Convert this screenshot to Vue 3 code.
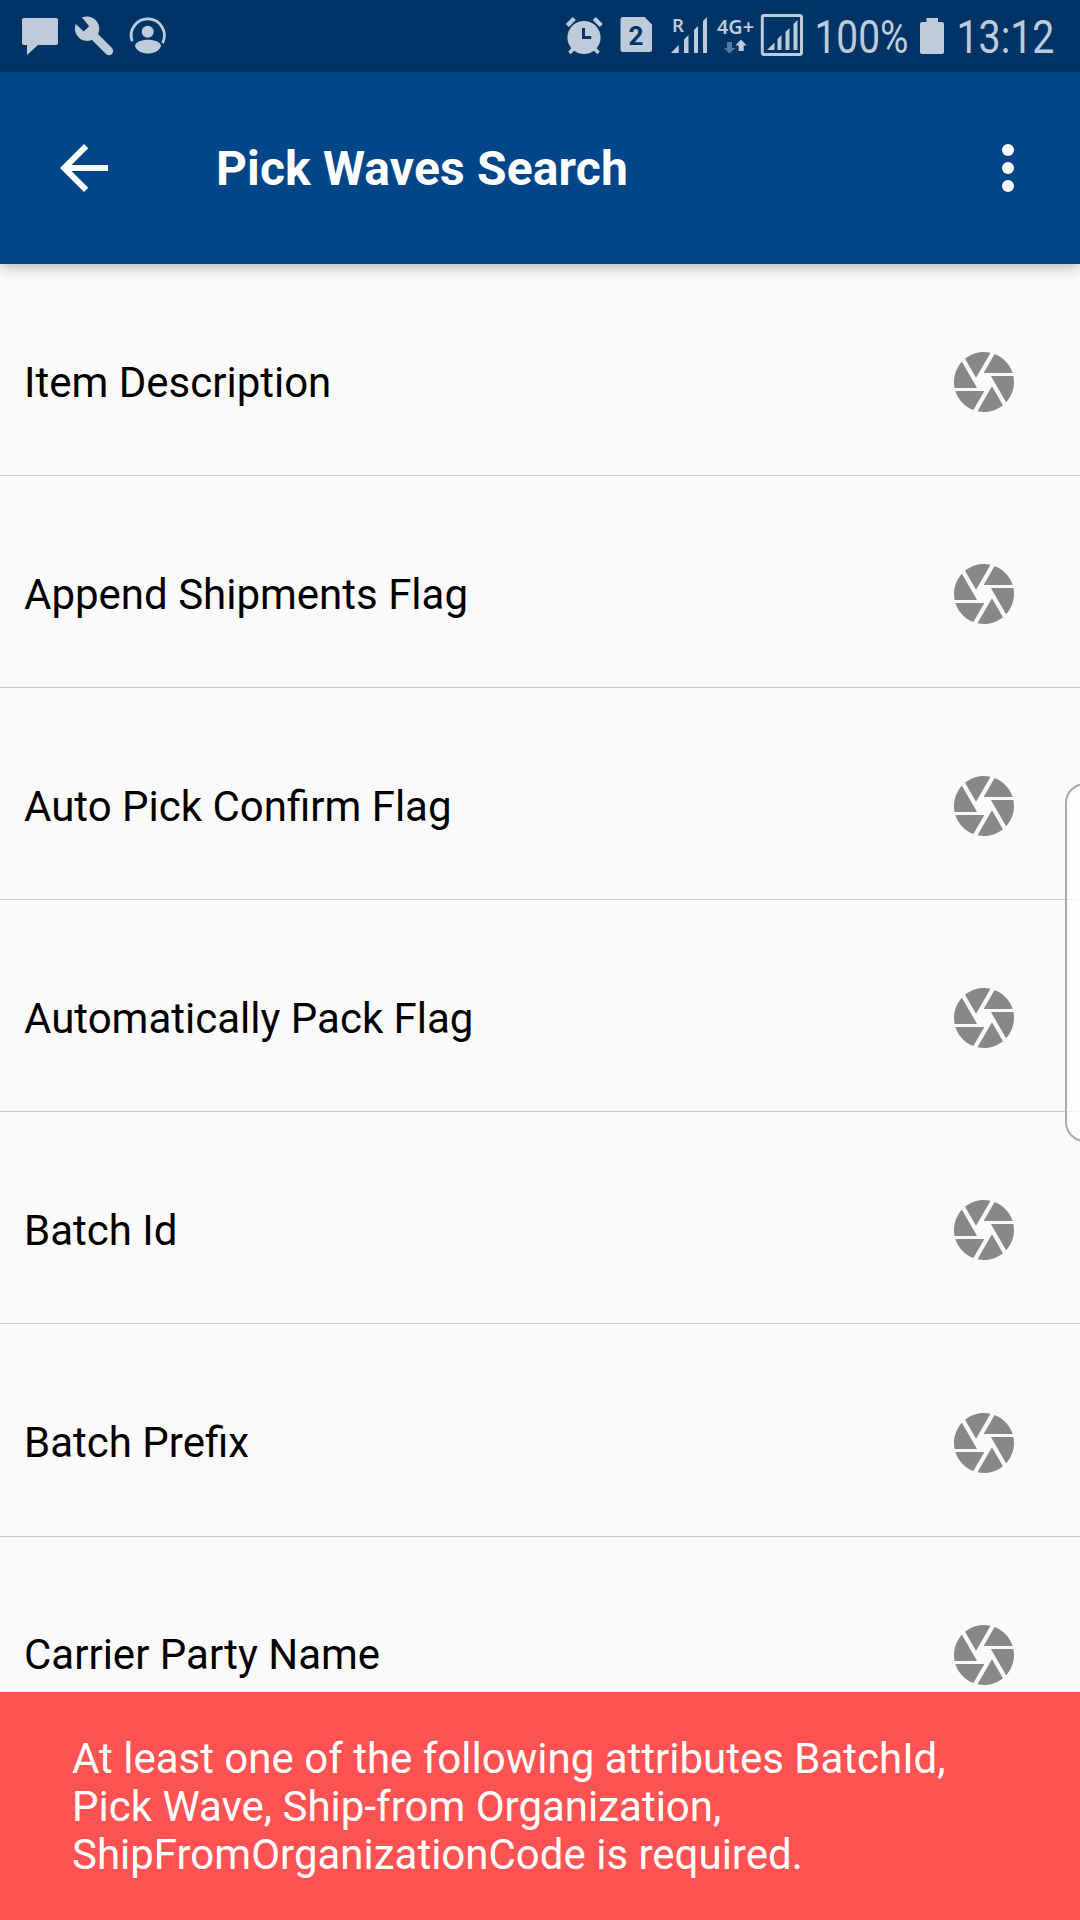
<script setup>
const attributes = [
  'Item Description',
  'Append Shipments Flag',
  'Auto Pick Confirm Flag',
  'Automatically Pack Flag',
  'Batch Id',
  'Batch Prefix',
  'Carrier Party Name',
]
</script>

<template>
  <div class="screen">
    <div class="status">
      <svg class="notifications" viewBox="0 0 200 72" width="200" height="72">
        <path d="M24 18h32q2 0 2 2v23q0 2-2 2H38L27 55V45H24q-2 0-2-2V20q0-2 2-2z" />
        <path d="M82 17.6A12.2 12.2 0 1 1 75.8 24L83.7 31.6 89.2 26.2z" />
        <path d="M93 35L109 51" fill="none" stroke="#bdcbda" stroke-width="8.4" stroke-linecap="round" />
        <path d="M132.2 41.3A16.6 16.6 0 1 1 162.6 43" fill="none" stroke="#bdcbda" stroke-width="2.8" />
        <circle cx="147.7" cy="31.8" r="6" />
        <path d="M135 46C135.500 37.600 160.500 37.600 161 46C158 56 138 56 135 46z" />
      </svg>
      <svg class="indicators" viewBox="550 0 530 72" width="530" height="72">
        <circle cx="584" cy="37.500" r="16.600" />
        <path d="M567.300 25.500l7-7M594.300 18.500l7 7" stroke="#bdcbda" stroke-width="4.500" />
        <path d="M574 48l-4.500 5M594 48l4.500 5" stroke="#bdcbda" stroke-width="3.500" />
        <path d="M583.500 28v9.500h7.800" fill="none" stroke="#003366" stroke-width="3" />
        <path d="M623 17h21.500l7.500 7.500V49.500q0 2.500-2.500 2.500H623q-2.500 0-2.500-2.500V19.500q0-2.500 2.500-2.500z" />
        <text x="628.500" y="45" font-size="25" font-weight="700" textLength="15" lengthAdjust="spacingAndGlyphs" class="dark">2</text>
        <text x="672" y="32" font-size="17" class="noto" textLength="12" lengthAdjust="spacingAndGlyphs">R</text>
        <path d="M671 53l7.700-8v8zM684 53V39.500l4.500-4.500v18zM694 53V30l4-4v27zM703 53V21l4-4v36z" />
        <text x="717" y="34" font-size="19" class="noto" textLength="37" lengthAdjust="spacingAndGlyphs">4G+</text>
        <path d="M727 42h5v6h3.500l-6 5.500-5.500-5.500h3z" fill="#5078a0" />
        <path d="M738.700 51v-5.500h-3.200l5.500-6 5.700 6h-3v5.500z" />
        <rect x="762.300" y="15.500" width="39.200" height="39" rx="2" fill="none" stroke="#bdcbda" stroke-width="3" />
        <path d="M767 50l7.500-7.500V50zM777.500 50V39l4-4v15zM785.500 50V32l4-4v22zM793.500 50V24l4-4v30z" />
        <text x="814.500" y="53" font-size="46" textLength="94" lengthAdjust="spacingAndGlyphs">100%</text>
        <path d="M922 22h4.500v-4H938v4h4q2 0 2 2v28q0 2-2 2h-20q-2 0-2-2V24q0-2 2-2z" />
        <text x="956.500" y="53" font-size="46" textLength="98" lengthAdjust="spacingAndGlyphs">13:12</text>
      </svg>
    </div>

    <header class="appbar">
      <svg viewBox="0 0 24 24" width="72" height="72">
        <path d="M20 11H7.830l5.590-5.590L12 4l-8 8 8 8 1.410-1.410L7.830 13H20v-2z" />
      </svg>
      <h1>Pick Waves Search</h1>
      <svg viewBox="0 0 24 24" width="72" height="72">
        <circle cx="12" cy="6" r="2" />
        <circle cx="12" cy="12" r="2" />
        <circle cx="12" cy="18" r="2" />
      </svg>
    </header>

    <main class="list">
      <div v-for="name in attributes" :key="name" class="row">
        <span>{{ name }}</span>
        <svg viewBox="0 0 24 24" width="72" height="72">
          <path d="M9.4 10.5l4.77-8.26C13.47 2.09 12.75 2 12 2c-2.4 0-4.6.85-6.32 2.25l3.66 6.35.06-.1zM21.54 9c-.92-2.92-3.15-5.26-6-6.34L11.88 9h9.66zm.26 1h-7.49l.29.5 4.76 8.25C20.99 16.97 22 14.61 22 12c0-.69-.07-1.35-.2-2zM8.54 12l-3.9-6.75C3.01 7.03 2 9.39 2 12c0 .69.07 1.35.2 2h7.49l-1.15-2zm-6.08 3c.92 2.92 3.15 5.26 6 6.34L12.12 15H2.46zm11.27 0l-3.9 6.76c.7.15 1.42.24 2.17.24 2.4 0 4.6-.85 6.32-2.25l-3.66-6.35-.93 1.6z" />
        </svg>
      </div>
    </main>

    <div class="snackbar">
      At least one of the following attributes BatchId,<br />
      Pick Wave, Ship-from Organization,<br />
      ShipFromOrganizationCode is required.
    </div>
    <div class="edge-handle"></div>
  </div>
</template>

<style>
body {
  margin: 0;
}
</style>

<style scoped>
.screen {
  position: relative;
  display: flex;
  flex-direction: column;
  width: 1080px;
  height: 1920px;
  overflow: hidden;
  background: #fafafa;
  font-family: Roboto, sans-serif;
}
svg {
  display: block;
  flex: none;
}
.status {
  display: flex;
  justify-content: space-between;
  height: 72px;
  flex: none;
  background: #003366;
  fill: #bdcbda;
}
.dark {
  fill: #003366;
}
.noto {
  font-family: "Noto Sans", sans-serif;
  font-weight: 600;
}
.appbar {
  position: relative;
  z-index: 1;
  display: flex;
  align-items: center;
  box-sizing: border-box;
  height: 192px;
  flex: none;
  padding: 0 36px 0 48px;
  background: #004689;
  color: #fff;
  fill: #fff;
  box-shadow: 0 6px 12px rgba(0, 0, 0, 0.18), 0 2px 6px rgba(0, 0, 0, 0.06);
}
h1 {
  flex: 1;
  margin: 0 0 0 96px;
  padding-top: 2px;
  font-size: 48px;
  line-height: 56px;
  font-weight: 700;
  letter-spacing: 0.15px;
}
.list {
  flex: 1;
  min-height: 0;
  overflow: hidden;
}
.row {
  display: flex;
  align-items: center;
  justify-content: space-between;
  box-sizing: border-box;
  height: 212px;
  padding: 24px 60px 0 24px;
  border-bottom: 1px solid #c0c8ce;
  font-size: 42px;
  line-height: 50px;
  color: #000;
  fill: #888;
}
.row span {
  padding-top: 2px;
}
.row:nth-child(6) {
  height: 213px;
  padding-top: 25px;
}
.row:nth-child(n + 6) span {
  padding-top: 0;
}
.snackbar {
  flex: none;
  box-sizing: border-box;
  height: 228px;
  padding: 43px 72px 41px;
  background: #ff5252;
  color: #fff;
  font-size: 42px;
  line-height: 48px;
  white-space: nowrap;
}
.edge-handle {
  position: absolute;
  left: 1065px;
  top: 783px;
  box-sizing: border-box;
  width: 40px;
  height: 359px;
  border: 2px solid #aaa;
  border-radius: 20px;
  background: rgba(255, 255, 255, 0.8);
}
</style>
